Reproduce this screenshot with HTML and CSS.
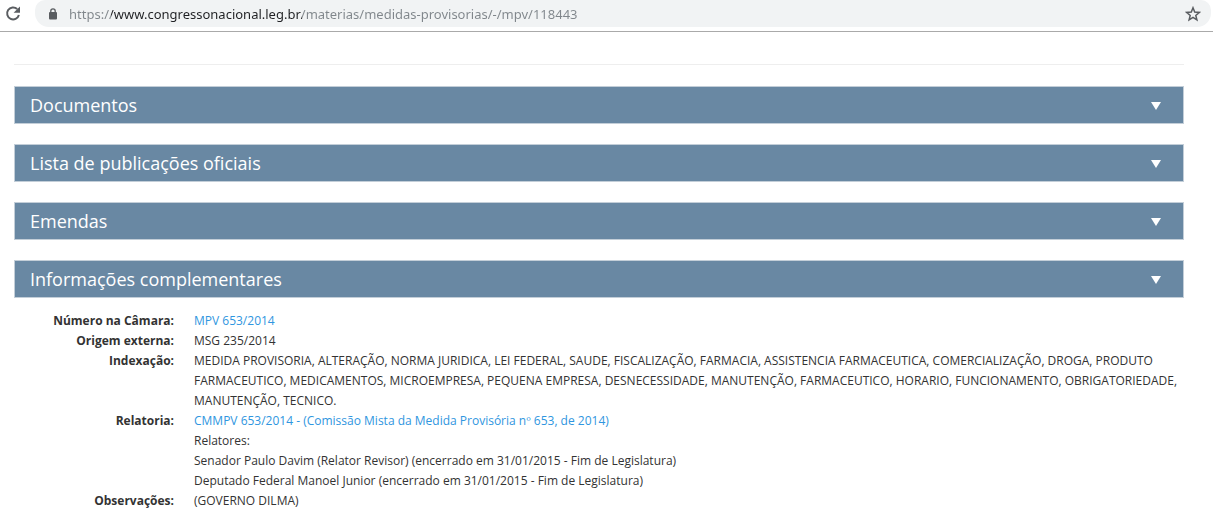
FILE: index.html
```html
<!DOCTYPE html>
<html lang="pt-BR">
<head>
  <meta charset="UTF-8" />
  <meta name="viewport" content="width=device-width, initial-scale=1.0" />
  <title>MPV 653/2014 - Congresso Nacional</title>
  <link rel="stylesheet" href="styles.css">
</head>
<body>

  <header class="toolbar">
    <button class="reload" type="button" aria-label="Recarregar">
      <svg width="16" height="16" viewBox="0 0 16 16"><path d="M13.9 9A6 6 0 1 1 12.2 3" fill="none" stroke="#5a5d61" stroke-width="2"/><path d="M15 .4v6.4H8.6z" fill="#5a5d61"/></svg>
    </button>
    <div class="address">
      <svg class="lock" width="10" height="12" viewBox="0 0 10 12"><rect x="1" y="4" width="8" height="7.5" rx="1" fill="#5a5d61"/><path d="M2.8 4.5V3a2.2 2.2 0 0 1 4.4 0v1.5" fill="none" stroke="#5a5d61" stroke-width="1.3"/></svg>
      <input class="url" type="text" aria-label="Endereço" value="https://www.congressonacional.leg.br/materias/medidas-provisorias/-/mpv/118443" />
      <button class="star" type="button" aria-label="Favoritos">
        <svg width="16" height="16" viewBox="0 0 16 16"><path d="M8 1.8l1.7 4.3 4.6.3-3.5 3 1.1 4.5L8 11.4l-3.9 2.5 1.1-4.5-3.5-3 4.6-.3z" fill="none" stroke="#5a5d61" stroke-width="1.5"/></svg>
      </button>
    </div>
  </header>

  <main class="content">
    <hr class="divider">

    <h3 class="section"><button type="button">Documentos <span class="arrow"></span></button></h3>
    <h3 class="section"><button type="button">Lista de publicações oficiais <span class="arrow"></span></button></h3>
    <h3 class="section"><button type="button">Emendas <span class="arrow"></span></button></h3>
    <h3 class="section"><button type="button">Informações complementares <span class="arrow"></span></button></h3>

    <dl class="info">
      <dt>Número na Câmara:</dt>
      <dd><a href="#">MPV 653/2014</a></dd>
      <dt>Origem externa:</dt>
      <dd>MSG 235/2014</dd>
      <dt>Indexação:</dt>
      <dd>MEDIDA PROVISORIA, ALTERAÇÃO, NORMA JURIDICA, LEI FEDERAL, SAUDE, FISCALIZAÇÃO, FARMACIA, ASSISTENCIA FARMACEUTICA, COMERCIALIZAÇÃO, DROGA, PRODUTO FARMACEUTICO, MEDICAMENTOS, MICROEMPRESA, PEQUENA EMPRESA, DESNECESSIDADE, MANUTENÇÃO, FARMACEUTICO, HORARIO, FUNCIONAMENTO, OBRIGATORIEDADE, MANUTENÇÃO, TECNICO.</dd>
      <dt>Relatoria:</dt>
      <dd>
        <a href="#">CMMPV 653/2014 - (Comissão Mista da Medida Provisória nº 653, de 2014)</a>
        <div>Relatores:</div>
        <div>Senador Paulo Davim (Relator Revisor) (encerrado em 31/01/2015 - Fim de Legislatura)</div>
        <div>Deputado Federal Manoel Junior (encerrado em 31/01/2015 - Fim de Legislatura)</div>
      </dd>
      <dt>Observações:</dt>
      <dd>(GOVERNO DILMA)</dd>
    </dl>
  </main>

</body>
</html>
```

FILE: styles.css
```css
:root {
  --bar: #6988a3;
  --bar-border: #c3ced8;
  --link: #2f96e0;
}
body {
  font-family: "Open Sans", sans-serif;
  font-size: 12px;
  line-height: 20px;
  margin: 0;
  color: #333;
  background: #fff;
}
button {
  font: inherit;
  border: none;
  padding: 0;
  background: none;
  cursor: pointer;
}
svg {
  display: block;
}

/* browser bar */
.toolbar {
  display: flex;
  align-items: center;
  gap: 14px;
  padding: 0 2px 4px 5px;
  border-bottom: 1px solid #aaa;
}
.address {
  flex: 1;
  display: flex;
  align-items: center;
  height: 27px;
  padding: 0 10px 0 13px;
  background: #f1f3f4;
  border-radius: 10px 10px 14px 14px;
}
.url {
  flex: 1;
  min-width: 0;
  margin-left: 11px;
  padding: 0;
  border: none;
  outline: none;
  font-family: "Noto Sans", sans-serif;
  font-size: 13px;
  color: #80868b;
  /* the host is darker than the scheme and the path */
  background: linear-gradient(to right, #80868b 42px, #202124 42px, #202124 233px, #80868b 233px);
  -webkit-background-clip: text;
  background-clip: text;
  -webkit-text-fill-color: transparent;
}

/* page */
.content {
  padding: 32px 29px 12px 14px;
}
.divider {
  margin: 0 0 21px;
  border: none;
  border-top: 1px solid #eee;
}
.section {
  margin: 0 0 20px;
  font-size: 18px;
  font-weight: normal;
}
.section button {
  display: flex;
  align-items: center;
  justify-content: space-between;
  width: 100%;
  height: 38px;
  padding: 0 22px 0 15px;
  color: #fff;
  background: var(--bar);
  border: 1px solid var(--bar-border);
}
.arrow {
  margin-top: 2px;
  border: 5px solid transparent;
  border-top: 8px solid #fff;
  border-bottom: none;
}
.info {
  display: grid;
  grid-template-columns: 160px 1fr;
  column-gap: 20px;
  margin: -7px 0 0;
}
.info dt {
  font-weight: bold;
  text-align: right;
}
.info dd {
  margin: 0;
}
a {
  color: var(--link);
  text-decoration: none;
}
```
